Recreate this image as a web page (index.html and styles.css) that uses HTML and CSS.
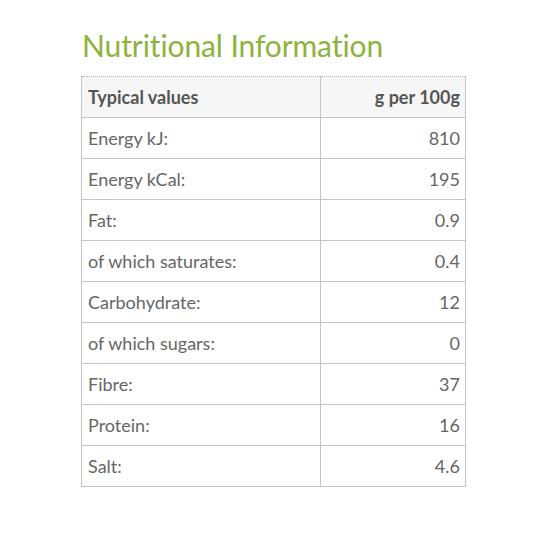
FILE: index.html
```html
<!DOCTYPE html>
<html>
<head>
<meta charset="utf-8">
<link rel="stylesheet" href="styles.css">
</head>
<body>
<div class="wrap">
  <h2 class="title">Nutritional Information</h2>
  <table class="nutri">
    <thead>
      <tr><th>Typical values</th><th class="num">g per 100g</th></tr>
    </thead>
    <tbody>
      <tr><td>Energy kJ:</td><td class="num">810</td></tr>
      <tr><td>Energy kCal:</td><td class="num">195</td></tr>
      <tr><td>Fat:</td><td class="num">0.9</td></tr>
      <tr><td>of which saturates:</td><td class="num">0.4</td></tr>
      <tr><td>Carbohydrate:</td><td class="num">12</td></tr>
      <tr><td>of which sugars:</td><td class="num">0</td></tr>
      <tr><td>Fibre:</td><td class="num">37</td></tr>
      <tr><td>Protein:</td><td class="num">16</td></tr>
      <tr><td>Salt:</td><td class="num">4.6</td></tr>
    </tbody>
  </table>
</div>
</body>
</html>
```
FILE: styles.css
```css
html, body { margin: 0; padding: 0; background: #fff; }
body { font-family: Lato, "Open Sans", sans-serif; font-variant-ligatures: none; }
.wrap { padding: 26px 0 0 81px; }
.title {
  margin: 0 0 12px 1px;
  font-weight: 400;
  font-size: 30px;
  line-height: 38px;
  color: #8cb33c;
  letter-spacing: -0.1px;
}
.nutri {
  border-collapse: collapse;
  width: 385px;
  border: 1px solid #c4c4c4;
  border-top: 1px dotted #b8b8b8;
}
.nutri th, .nutri td {
  height: 41px;
  padding: 0 5px 0 6px;
  border: 1px solid #c4c4c4;
  font-size: 18px;
  color: #666;
  text-align: left;
  box-sizing: border-box;
}
.nutri th {
  font-weight: 700;
  color: #555;
  background: #f6f6f6;
  border-top: 1px dotted #b8b8b8;
}
.nutri th:first-child, .nutri td:first-child { width: 239px; }
.nutri .num { text-align: right; }
```
